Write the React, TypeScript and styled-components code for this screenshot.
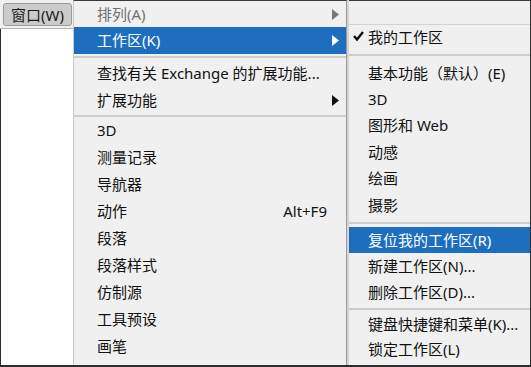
import React, { FC } from 'react';
import styled, { createGlobalStyle } from 'styled-components';

const Global = createGlobalStyle`
    html, body {
        margin: 0;
        padding: 0;
        background: #f0f0f0;
    }
    body {
        font-family: "Noto Sans", "Noto Sans CJK SC", sans-serif;
        font-size: 15px;
        color: #111;
    }
`;

const Frame = styled.div`
    width: 531px;
    height: 367px;
    box-sizing: border-box;
    display: flex;
    overflow: hidden;
    background: #f0f0f0;
    border-bottom: 2px solid #2e2e2e;
    border-right: 1px solid #2e2e2e;
`;

const LeftCol = styled.div`
    width: 73px;
    flex: none;
    display: flex;
    flex-direction: column;
`;

const MenuBar = styled.div`
    height: 29px;
    flex: none;
    box-sizing: border-box;
    background: #f0f0f0;
    border-bottom: 1px solid #b4b4b4;
    padding: 3px 0 0 3px;
`;

const BarButton = styled.div`
    width: 69px;
    height: 23px;
    box-sizing: border-box;
    padding-bottom: 1px;
    background: #cbcbcb;
    border: 1px solid #9c9c9c;
    border-radius: 3px;
    display: flex;
    align-items: center;
    justify-content: center;
    font-size: 15px;
    color: #1a1a1a;
`;

const Blank = styled.div`
    flex: 1;
    background: #fff;
    border-left: 1px solid #2e2e2e;
`;

const Menu = styled.div<{ $width: number }>`
    width: ${p => p.$width}px;
    flex: none;
    box-sizing: border-box;
    display: flex;
    flex-direction: column;
    background: #f0f0f0;
    border-top: 1px solid #3a3a3a;
`;

const MainMenu = styled(Menu)`
    border-left: 1px solid #c9c9c9;
    border-right: 1px solid #9a9a9a;
    box-shadow: 2px 0 0 #d4d4d4;
    position: relative;
    z-index: 1;
`;

const Row = styled.div<{ $active?: boolean; $disabled?: boolean; $h?: number; $pad: number }>`
    height: ${p => p.$h ?? 27}px;
    flex: none;
    box-sizing: border-box;
    display: flex;
    align-items: center;
    padding: 0 7px 2px ${p => p.$pad}px;
    white-space: nowrap;
    background: ${p => (p.$active ? '#1d6ebf' : 'transparent')};
    color: ${p => (p.$active ? '#fff' : p.$disabled ? '#707070' : '#111')};
    position: relative;
`;

const Label = styled.span`
    flex: 1;
`;

const Shortcut = styled.span`
    margin-right: 12px;
`;

const Sep = styled.div<{ $h: number }>`
    height: ${p => p.$h}px;
    flex: none;
    display: flex;
    align-items: center;
    &::after {
        content: '';
        display: block;
        width: 100%;
        height: 2px;
        background: #cdcdcd;
    }
`;

const TopGap = styled.div`
    height: 23px;
    flex: none;
    border-bottom: 1px solid #d2d2d2;
`;

const Check = styled.svg`
    position: absolute;
    left: 6px;
    top: 50%;
    margin-top: -6px;
`;

const Arrow: FC<{ color: string }> = ({ color }) => (
    <svg width="7" height="11" viewBox="0 0 7 11" style={{ marginTop: 2 }}>
        <path d="M0 0 L7 5.5 L0 11 Z" fill={color} />
    </svg>
);

const mainItems: Array<[string, string?]> = [
    ['3D'],
    ['测量记录'],
    ['导航器'],
    ['动作', 'Alt+F9'],
    ['段落'],
    ['段落样式'],
    ['仿制源'],
    ['工具预设'],
    ['画笔'],
    ['画笔设置'],
];

const subTop = ['基本功能（默认）(E)', '3D', '图形和 Web', '动感', '绘画', '摄影'];

const App: FC = () => (
    <>
        <Global />
        <Frame>
            <LeftCol>
                <MenuBar>
                    <BarButton>窗口(W)</BarButton>
                </MenuBar>
                <Blank />
            </LeftCol>
            <MainMenu $width={274}>
                <Row $pad={23} $disabled $h={26}>
                    <Label>排列(A)</Label>
                    <Arrow color="#777" />
                </Row>
                <Row $pad={23} $active>
                    <Label>工作区(K)</Label>
                    <Arrow color="#fff" />
                </Row>
                <Sep $h={6} />
                <Row $pad={23}>
                    <Label>查找有关 Exchange 的扩展功能...</Label>
                </Row>
                <Row $pad={23}>
                    <Label>扩展功能</Label>
                    <Arrow color="#111" />
                </Row>
                <Sep $h={3} />
                {mainItems.map(([label, key]) => (
                    <Row $pad={23} key={label}>
                        <Label>{label}</Label>
                        {key && <Shortcut>{key}</Shortcut>}
                    </Row>
                ))}
            </MainMenu>
            <Menu $width={184}>
                <TopGap />
                <Row $pad={21} $h={24}>
                    <Check width="11" height="10" viewBox="0 0 11 10">
                        <path d="M1 5 L4 8.5 L10 1" stroke="#111" strokeWidth="2.4" fill="none" />
                    </Check>
                    <Label>我的工作区</Label>
                </Row>
                <Sep $h={11} />
                {subTop.map(label => (
                    <Row $pad={21} $h={26.4} key={label}><Label>{label}</Label></Row>
                ))}
                <Sep $h={9} />
                <Row $pad={21} $h={26} $active><Label>复位我的工作区(R)</Label></Row>
                <Row $pad={21} $h={26}><Label>新建工作区(N)...</Label></Row>
                <Row $pad={21} $h={26}><Label>删除工作区(D)...</Label></Row>
                <Sep $h={7} />
                <Row $pad={21} $h={25}><Label>键盘快捷键和菜单(K)...</Label></Row>
                <Row $pad={21} $h={25}><Label>锁定工作区(L)</Label></Row>
            </Menu>
        </Frame>
    </>
);

export default App;
